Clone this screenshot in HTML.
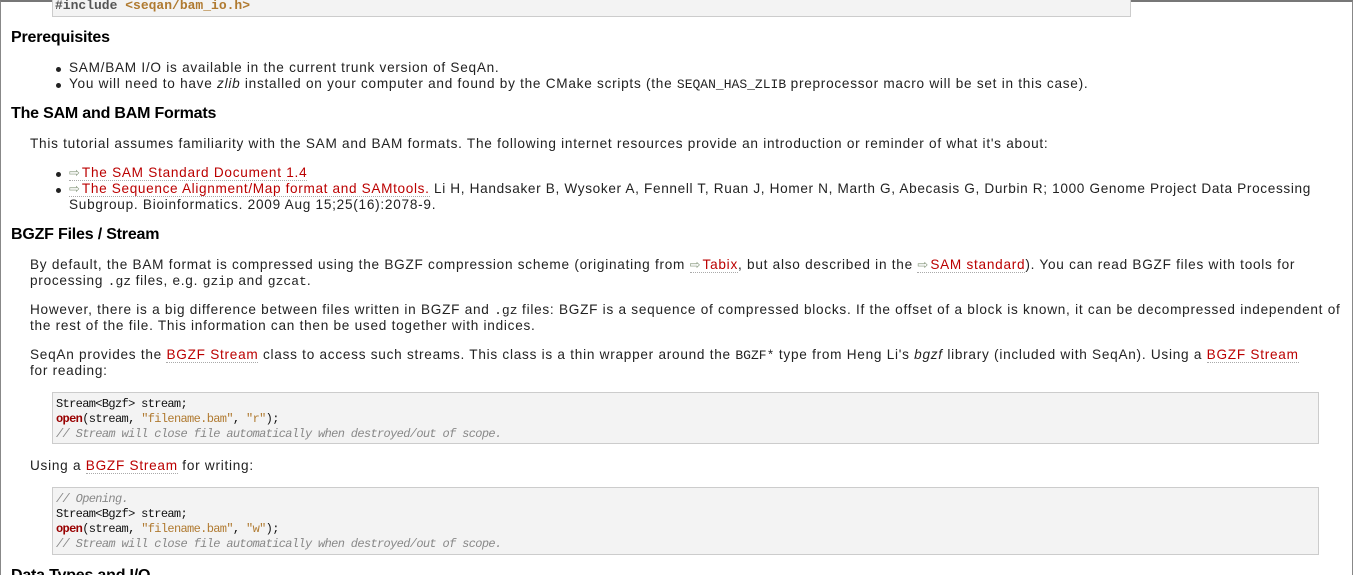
<!DOCTYPE html>
<html><head><meta charset="utf-8"><style>
html,body{margin:0;padding:0;background:#fff;width:1353px;height:575px;overflow:hidden;position:relative}
.frame{position:absolute;left:0;top:0;width:1351px;height:573px;border:1px solid #888;border-top:2px solid #777}
.l{position:absolute;white-space:nowrap;font-family:"Liberation Sans",sans-serif;font-size:13.6px;letter-spacing:0.74px;color:#222;line-height:16px}
.h{position:absolute;white-space:nowrap;font-family:"Liberation Sans",sans-serif;font-size:16px;font-weight:bold;color:#000;line-height:18px;letter-spacing:-0.2px}
a{color:#b00;text-decoration:none;border-bottom:1px dotted #aaa}
.ar{color:#8a9a80;font-size:13px;letter-spacing:0;margin-right:2px}
.m{font-family:"Liberation Mono",monospace;font-size:13px;letter-spacing:0}
.dot{position:absolute;width:5px;height:5px;border-radius:50%;background:#222}
.code{position:absolute;left:52px;width:1265px;background:#f3f3f3;border:1px solid #ccc}
.cl{position:absolute;left:3px;white-space:nowrap;font-family:"Liberation Mono",monospace;font-size:12px;letter-spacing:-0.65px;line-height:15px;color:#111}
.k{color:#900;font-weight:bold}.s{color:#b07a30}.c{color:#888;font-style:italic}
</style></head><body>
<div class="frame"></div>
<div class="code" style="top:-2px;width:1077px;height:17px"><div class="cl" style="top:-1px;font-weight:bold;color:#555;font-size:13px;letter-spacing:0;left:2px">#include <span class="s">&lt;seqan/bam_io.h&gt;</span></div></div>
<div class="h" style="left:11px;top:29px">Prerequisites</div>
<div class="dot" style="left:56px;top:67px"></div><div class="l" style="left:69px;top:60px">SAM/BAM I/O is available in the current trunk version of SeqAn.</div>
<div class="dot" style="left:56px;top:83px"></div><div class="l" style="left:69px;top:76px">You will need to have <i>zlib</i> installed on your computer and found by the CMake scripts (the <span class="m">SEQAN_HAS_ZLIB</span> preprocessor macro will be set in this case).</div>
<div class="h" style="left:11px;top:105px">The SAM and BAM Formats</div>
<div class="l" style="left:30px;top:136px">This tutorial assumes familiarity with the SAM and BAM formats. The following internet resources provide an introduction or reminder of what it's about:</div>
<div class="dot" style="left:56px;top:172px"></div><div class="l" style="left:69px;top:165px"><a><span class="ar">⇨</span>The SAM Standard Document 1.4</a></div>
<div class="dot" style="left:56px;top:188px"></div><div class="l" style="left:69px;top:181px;letter-spacing:0.66px"><a><span class="ar">⇨</span>The Sequence Alignment/Map format and SAMtools.</a> Li H, Handsaker B, Wysoker A, Fennell T, Ruan J, Homer N, Marth G, Abecasis G, Durbin R; 1000 Genome Project Data Processing</div>
<div class="l" style="left:69px;top:197px">Subgroup. Bioinformatics. 2009 Aug 15;25(16):2078-9.</div>
<div class="h" style="left:11px;top:226px">BGZF Files / Stream</div>
<div class="l" style="left:30px;top:257px">By default, the BAM format is compressed using the BGZF compression scheme (originating from <a><span class="ar">⇨</span>Tabix</a>, but also described in the <a><span class="ar">⇨</span>SAM standard</a>). You can read BGZF files with tools for</div>
<div class="l" style="left:30px;top:273px">processing <span class="m">.gz</span> files, e.g. <span class="m">gzip</span> and <span class="m">gzcat</span>.</div>
<div class="l" style="left:30px;top:302px">However, there is a big difference between files written in BGZF and <span class="m">.gz</span> files: BGZF is a sequence of compressed blocks. If the offset of a block is known, it can be decompressed independent of</div>
<div class="l" style="left:30px;top:318px">the rest of the file. This information can then be used together with indices.</div>
<div class="l" style="left:30px;top:347px">SeqAn provides the <a>BGZF Stream</a> class to access such streams. This class is a thin wrapper around the <span class="m">BGZF*</span> type from Heng Li's <i>bgzf</i> library (included with SeqAn). Using a <a>BGZF Stream</a></div>
<div class="l" style="left:30px;top:363px">for reading:</div>
<div class="code" style="top:392px;height:50px">
<div class="cl" style="top:4px">Stream&lt;Bgzf&gt; stream;</div>
<div class="cl" style="top:19px"><span class="k">open</span>(stream, <span class="s">"filename.bam"</span>, <span class="s">"r"</span>);</div>
<div class="cl c" style="top:34px;color:#888">// Stream will close file automatically when destroyed/out of scope.</div></div>
<div class="l" style="left:30px;top:458px">Using a <a>BGZF Stream</a> for writing:</div>
<div class="code" style="top:487px;height:66px">
<div class="cl c" style="top:4px;color:#888">// Opening.</div>
<div class="cl" style="top:19px">Stream&lt;Bgzf&gt; stream;</div>
<div class="cl" style="top:34px"><span class="k">open</span>(stream, <span class="s">"filename.bam"</span>, <span class="s">"w"</span>);</div>
<div class="cl c" style="top:49px;color:#888">// Stream will close file automatically when destroyed/out of scope.</div></div>
<div class="h" style="left:11px;top:567px">Data Types and I/O</div>
</body></html>
